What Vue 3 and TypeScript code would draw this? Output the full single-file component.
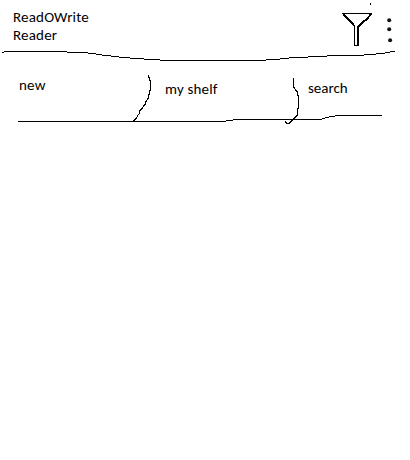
<script setup lang="ts">
interface Tab {
  id: string
  label: string
}

const titleLines: string[] = ['ReadOWrite', 'Reader']
const tabs: Tab[] = [
  { id: 'new', label: 'new' },
  { id: 'shelf', label: 'my shelf' },
  { id: 'search', label: 'search' },
]
</script>

<template>
  <main class="screen">
    <header class="header">
      <h1 class="title">
        <span v-for="line in titleLines" :key="line">{{ line }}</span>
      </h1>
      <svg class="actions" width="70" height="46" viewBox="340 0 70 46" shape-rendering="crispEdges">
        <path class="ink" d="M370 3.5h1M370 4.5h1" />
        <path class="ink" d="M342 13.5h30" />
        <path class="ink bold" d="M343.5 14L347 18L350 21L354.5 26M371 14L367 19L363 22L358.5 27" />
        <path class="ink" d="M354.5 25v21M354 45.5h5M357.5 26v20M358.5 26v20" />
        <g class="dots" shape-rendering="auto">
          <circle cx="389.2" cy="20.3" r="2" />
          <circle cx="389.2" cy="29.2" r="2" />
          <circle cx="390.1" cy="40.3" r="2" />
        </g>
      </svg>
    </header>
    <svg class="rule" width="410" height="18" viewBox="0 46 410 18" shape-rendering="crispEdges">
      <path class="ink" d="M2 52.5h2M4 51.5h63M67 52.5h21M88 53.5h8M96 54.5h6M102 55.5h9M111 56.5h8M119 57.5h11M130 58.5h14M144 59.5h16M160 60.5h106M266 59.5h14M280 58.5h9M289 57.5h19M308 56.5h19M327 55.5h37M364 54.5h12M376 53.5h9M385 52.5h5M390 51.5h5" />
    </svg>
    <nav class="tabs">
      <a v-for="tab in tabs" :key="tab.id" :class="['tab', tab.id]">{{ tab.label }}</a>
      <svg class="strokes" width="410" height="64" viewBox="0 64 410 64" shape-rendering="crispEdges">
        <path class="ink" d="M18 121.5h208M226 120.5h7M233 119.5h89M322 118.5h3M325 117.5h4M329 116.5h6M335 115.5h47" />
        <path class="ink" d="M148.5 75V77L149.5 78V80L150.5 81V90L149.5 91V94L148.5 95V98L147.5 99L146.5 101L145.5 102V104L143.5 106L142.5 108L139.5 111V113L137.5 116L136.5 118L133.5 121" />
        <path class="ink" d="M293.5 78V87L294.5 88L295.5 90L297.5 92V95L298.5 96V108L297.5 109V115L294.5 118L289.5 123H286.5L285.5 122V121" />
      </svg>
    </nav>
  </main>
</template>

<style>
body {
  background: #fff;
}
</style>

<style scoped>
.screen {
  width: 410px;
  height: 460px;
  overflow: hidden;
  background: #fff;
  color: #000;
  font: 15px/18px Carlito, Calibri, Lato, "Open Sans", sans-serif;
  letter-spacing: 0.18px;
}
.header {
  display: flex;
  justify-content: space-between;
  height: 46px;
}
.title {
  display: flex;
  flex-direction: column;
  margin: 0;
  padding: 8px 0 0 13px;
  font: inherit;
}
.rule,
.actions {
  display: block;
}
.tabs {
  position: relative;
  display: grid;
  grid-template-columns: 146px 143px 1fr;
  height: 64px;
}
.tab {
  padding: 12px 0 0 19px;
}
.shelf {
  padding-top: 16px;
}
.search {
  padding-top: 15px;
  letter-spacing: 0;
}
.strokes {
  position: absolute;
  inset: 0;
  pointer-events: none;
}
.ink {
  fill: none;
  stroke: #000;
  stroke-width: 1;
}
.bold {
  stroke-width: 2;
}
.dots {
  fill: #111;
}
</style>
